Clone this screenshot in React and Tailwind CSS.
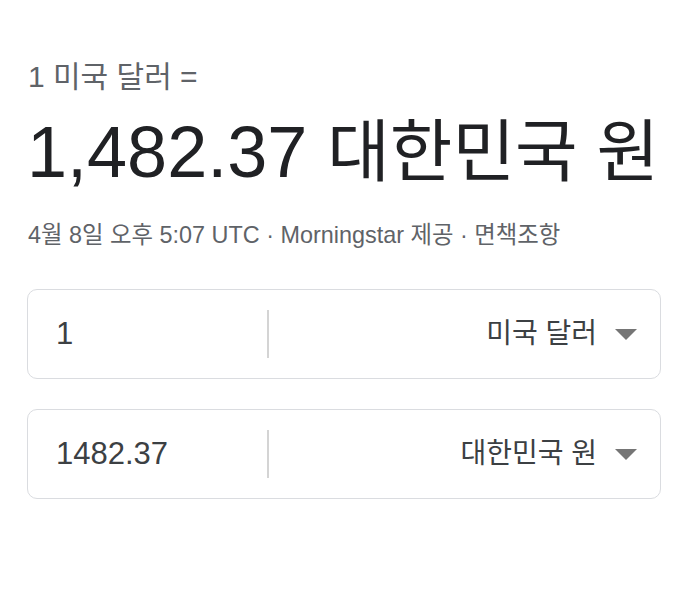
export default function App() {
  const rows = [
    { amount: '1', currency: '미국 달러' },
    { amount: '1482.37', currency: '대한민국 원' },
  ];

  return (
    <div className="w-[688px] h-[600px] bg-white px-[27px] pt-[56px] font-['Liberation_Sans','Noto_Sans_CJK_KR',sans-serif]">
      <div className="flex h-[40px] items-center pl-[1px] text-[30px] text-[#5f6368]">1 미국 달러 =</div>

      <div className="mt-[16px] flex h-[80px] items-center whitespace-nowrap text-[72px] text-[#202124]">
        1,482.37&nbsp;<span className="text-[68px]">대한민국 원</span>
      </div>

      <div className="mt-[29px] flex h-[30px] items-center pl-[1px] text-[23.4px] text-[#5f6368]">
        4월 8일 오후 5:07 UTC · Morningstar 제공 · 면책조항
      </div>

      <div className="mt-[38px] flex flex-col gap-[30px]">
        {rows.map((r) => (
          <div
            key={r.currency}
            className="flex h-[90px] items-center rounded-[10px] border border-[#dadce0]"
          >
            <div className="w-[239px] pl-[28px] text-[31px] text-[#3c4043]">{r.amount}</div>
            <div className="h-[48px] w-[2px] bg-[#d4d4d4]" />
            <div className="flex flex-1 items-center justify-end pr-[23px]">
              <span className="text-[28px] text-[#3c4043]">{r.currency}</span>
              <span className="ml-[18px] h-0 w-0 border-x-[11px] border-t-[11px] border-x-transparent border-t-[#757575]" />
            </div>
          </div>
        ))}
      </div>
    </div>
  );
}
